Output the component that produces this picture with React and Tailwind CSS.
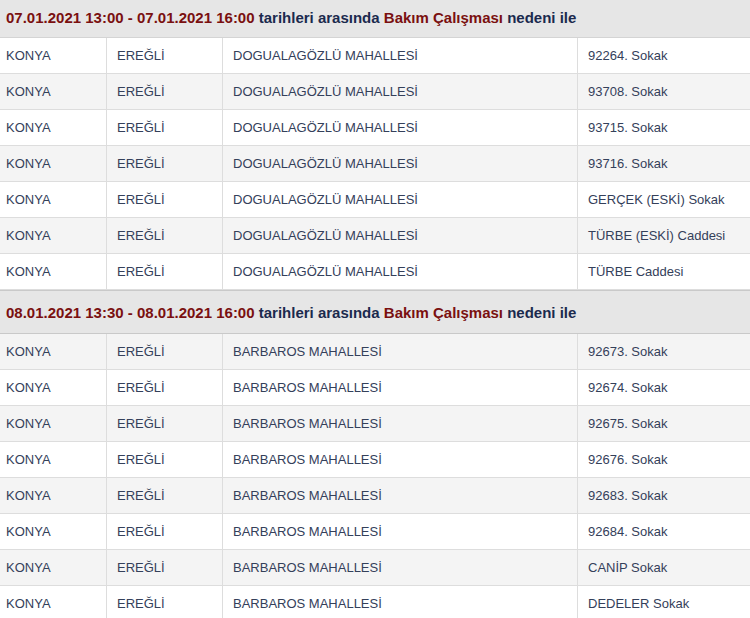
const groups = [
  {
    start: "07.01.2021 13:00",
    end: "07.01.2021 16:00",
    first: true,
    stripeFirst: false,
    mahalle: "DOGUALAGÖZLÜ MAHALLESİ",
    streets: [
      "92264. Sokak",
      "93708. Sokak",
      "93715. Sokak",
      "93716. Sokak",
      "GERÇEK (ESKİ) Sokak",
      "TÜRBE (ESKİ) Caddesi",
      "TÜRBE Caddesi",
    ],
  },
  {
    start: "08.01.2021 13:30",
    end: "08.01.2021 16:00",
    first: false,
    stripeFirst: true,
    mahalle: "BARBAROS MAHALLESİ",
    streets: [
      "92673. Sokak",
      "92674. Sokak",
      "92675. Sokak",
      "92676. Sokak",
      "92683. Sokak",
      "92684. Sokak",
      "CANİP Sokak",
      "DEDELER Sokak",
    ],
  },
];

function GroupHeader({ g }) {
  return (
    <div
      className={
        g.first
          ? "h-[38px] flex items-center pl-[6px] bg-[#e6e6e6] border-b border-[#d4d4d4]"
          : "h-[44px] flex items-center pt-[3px] pl-[6px] bg-[#e6e6e6] border-t border-b border-[#c9c9c9]"
      }
    >
      <span className="text-[15px] font-bold text-[#1b2a4e] whitespace-nowrap">
        <span className="text-[#7a1010]">
          {g.start} - {g.end}
        </span>{" "}
        tarihleri arasında <span className="text-[#7a1010]">Bakım Çalışması</span> nedeni ile
      </span>
    </div>
  );
}

function Row({ street, mahalle, gray }) {
  return (
    <div
      className={`grid grid-cols-[106px_116px_355px_1fr] h-[36px] border-b border-[#dddddd] text-[13px] text-[#34405a] ${
        gray ? "bg-[#f4f4f4]" : "bg-white"
      }`}
    >
      <div className="flex items-center pl-[6px]">KONYA</div>
      <div className="flex items-center pl-[10px] border-l border-[#dddddd]">EREĞLİ</div>
      <div className="flex items-center pl-[10px] border-l border-[#dddddd]">{mahalle}</div>
      <div className="flex items-center pl-[10px] border-l border-[#dddddd]">{street}</div>
    </div>
  );
}

export default function App() {
  return (
    <div
      className="w-[750px] h-[618px] overflow-hidden bg-white"
      style={{ fontFamily: '"Liberation Sans", Arial, sans-serif' }}
    >
      {groups.map((g) => (
        <div key={g.start}>
          <GroupHeader g={g} />
          {g.streets.map((s, i) => (
            <Row
              key={s}
              street={s}
              mahalle={g.mahalle}
              gray={g.stripeFirst ? i % 2 === 0 : i % 2 === 1}
            />
          ))}
        </div>
      ))}
    </div>
  );
}
